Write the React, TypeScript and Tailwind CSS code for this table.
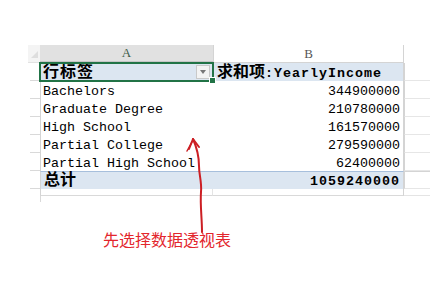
import React from "react";

const mono = "font-['Liberation_Mono','Noto_Sans_CJK_SC',monospace]";

const rows: [string, string][] = [
  ["Bachelors", "344900000"],
  ["Graduate Degree", "210780000"],
  ["High School", "161570000"],
  ["Partial College", "279590000"],
  ["Partial High School", "62400000"],
];

// little tick on the right edge of the row-header strip
function RowHead({ last = false }: { last?: boolean }) {
  return (
    <div className="h-[18px] flex justify-end items-end">
      <div className={`w-[10px] h-full ${last ? "" : "border-b border-[#d9d9d9]"}`} />
    </div>
  );
}

function Filler() {
  return <div className="h-[18px] border-l border-[#d4d4d4] border-b border-b-[#e6e6e6]" />;
}

export default function App() {
  return (
    <div className="w-[444px] h-[285px] bg-white relative overflow-hidden text-black">
      <div className="pt-[45px]">
        <div className="grid grid-cols-[40px_173px_191px_26px]">
          {/* column letters */}
          <div className="h-[18px] flex justify-end">
            <div className="w-[12px] h-full bg-[#f4f4f4] border-b border-[#e2e2e2] relative">
              <div className="absolute right-[2px] bottom-[4px] w-0 h-0 border-l-[7px] border-l-transparent border-b-[7px] border-b-[#dedede]" />
            </div>
          </div>
          <div className="h-[18px] bg-[#e1e1e1] border-b-2 border-[#c6c6c6] flex items-center justify-center text-[13px] text-[#3c5c48] font-['Liberation_Serif',serif]">
            A
          </div>
          <div className="h-[18px] bg-white border-l border-r border-[#d4d4d4] border-b border-b-[#d4d4d4] flex items-center justify-center text-[13px] text-[#555] font-['Liberation_Serif',serif]">
            B
          </div>
          <div className="h-[18px]" />

          {/* pivot header row */}
          <RowHead />
          <div className="h-[18px] bg-[#dce6f1] relative">
            <div className="absolute -left-[1px] -top-[1px] -right-[1px] -bottom-[1px] border-2 border-[#217346]" />
            <div className={`h-full flex items-end pb-0 pl-[3px] text-[16px] leading-none font-bold ${mono}`}>
              <span className="tracking-[1px]">行标签</span>
            </div>
            <div className="absolute right-[3px] top-[2px] w-[14px] h-[14px] bg-[#f3f3f3] border border-[#c9c9c9] flex items-center justify-center">
              <div className="w-0 h-0 border-l-[3px] border-r-[3px] border-t-[4px] border-l-transparent border-r-transparent border-t-[#777]" />
            </div>
            <div className="absolute -right-[3px] -bottom-[3px] w-[5px] h-[5px] bg-[#217346] border border-white box-content" />
          </div>
          <div className={`h-[18px] bg-[#dce6f1] border-r border-[#d4d4d4] flex items-end pb-0 pl-[4px] leading-none font-bold ${mono}`}>
            <span className="text-[16px]">求和项</span>
            <span className="text-[13.33px] tracking-[1px] pb-[1px]">:YearlyIncome</span>
          </div>
          <Filler />

          {/* data rows */}
          {rows.map(([label, value]) => (
            <React.Fragment key={label}>
              <RowHead />
              <div className={`h-[18px] border-l border-[#d4d4d4] flex items-end pb-[1px] pl-[2px] text-[13.33px] leading-none ${mono}`}>
                {label}
              </div>
              <div className={`h-[18px] border-r border-[#d4d4d4] flex items-end justify-end pb-[1px] pr-[3px] text-[13.33px] leading-none ${mono}`}>
                {value}
              </div>
              <Filler />
            </React.Fragment>
          ))}

          {/* grand total */}
          <RowHead />
          <div className={`h-[18px] bg-[#dce6f1] border-t border-[#a7bfdc] border-l border-l-[#d4d4d4] flex items-end pb-0 pl-[3px] text-[16px] leading-none font-bold ${mono}`}>
            总计
          </div>
          <div className={`h-[18px] bg-[#dce6f1] border-t border-[#a7bfdc] border-r border-r-[#d4d4d4] flex items-end justify-end pb-[1px] pr-[3px] text-[13.33px] tracking-[1px] leading-none font-bold ${mono}`}>
            1059240000
          </div>
          <div className="h-[18px] border-t border-[#cfcfcf] border-l border-[#d4d4d4] border-b border-b-[#e6e6e6]" />

          {/* cut-off next row */}
          <div className="h-[7px] flex justify-end">
            <div className="w-[10px] h-full" />
          </div>
          <div className="h-[7px] border-l border-[#d4d4d4] border-b border-b-[#d9d9d9] border-r border-r-[#e4e4e4]" />
          <div className="h-[7px] border-r border-[#d4d4d4] border-b border-b-[#d9d9d9]" />
          <div className="h-[7px] border-b border-[#e4e4e4]" />
        </div>
        <div className="ml-[40px] w-px h-[6px] bg-[#d9d9d9]" />
      </div>

      <p className="ml-[103px] mt-[28px] text-[16px] leading-[18px] text-[#e3262d] font-['Noto_Sans_CJK_SC',sans-serif]">
        先选择数据透视表
      </p>

      {/* hand-drawn arrow */}
      <svg className="absolute left-0 top-0 pointer-events-none" width="444" height="285" viewBox="0 0 444 285">
        <g fill="none" stroke="#cc1f24" strokeWidth="2" strokeLinecap="round" strokeLinejoin="round">
          <path d="M193 139 C197 148 199 156 199 166 C199 175 202 182 201 192 C200 205 202 218 202 232" />
          <path d="M189 149 L193 139 L199 147" />
          <path d="M187 151 L192 142" strokeWidth="1.5" />
        </g>
      </svg>
    </div>
  );
}
